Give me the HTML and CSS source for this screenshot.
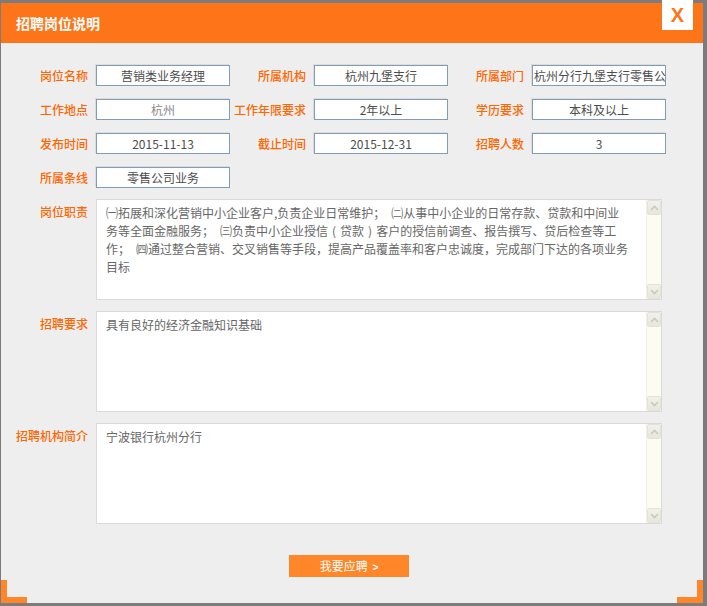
FILE: index.html
```html
<!DOCTYPE html>
<html lang="zh-CN">
<head>
<meta charset="utf-8">
<title>招聘岗位说明</title>
<link rel="stylesheet" href="styles.css">
</head>
<body>
<div class="backdrop">
  <div class="dialog">
    <div class="header">
      <h1 class="title">招聘岗位说明</h1>
      <a class="close" href="#">X</a>
    </div>
    <div class="body">
      <div class="grid">
        <div class="row">
          <div class="field"><span class="label">岗位名称</span><div class="input">营销类业务经理</div></div>
          <div class="field"><span class="label">所属机构</span><div class="input">杭州九堡支行</div></div>
          <div class="field"><span class="label">所属部门</span><div class="input left">杭州分行九堡支行零售公</div></div>
        </div>
        <div class="row">
          <div class="field"><span class="label">工作地点</span><div class="input light">杭州</div></div>
          <div class="field"><span class="label">工作年限要求</span><div class="input">2年以上</div></div>
          <div class="field"><span class="label">学历要求</span><div class="input">本科及以上</div></div>
        </div>
        <div class="row">
          <div class="field"><span class="label">发布时间</span><div class="input">2015-11-13</div></div>
          <div class="field"><span class="label">截止时间</span><div class="input">2015-12-31</div></div>
          <div class="field"><span class="label">招聘人数</span><div class="input">3</div></div>
        </div>
        <div class="row">
          <div class="field"><span class="label">所属条线</span><div class="input">零售公司业务</div></div>
        </div>
      </div>

      <div class="area-row">
        <span class="label area-label">岗位职责</span>
        <div class="textarea">
          <div class="ta-text">㈠拓展和深化营销中小企业客户,负责企业日常维护；　㈡从事中小企业的日常存款、贷款和中间业<br>务等全面金融服务；　㈢负责中小企业授信<span class="paren">(</span>贷款<span class="paren">)</span>客户的授信前调查、报告撰写、贷后检查等工<br>作；　㈣通过整合营销、交叉销售等手段，提高产品覆盖率和客户忠诚度，完成部门下达的各项业务<br>目标</div>
          <div class="scrollbar">
            <span class="sb-btn"><svg width="9" height="6" viewBox="0 0 9 6"><polyline points="1,5 4.5,1.5 8,5" fill="none" stroke="#c9c9bf" stroke-width="1.6"/></svg></span>
            <span class="sb-btn"><svg width="9" height="6" viewBox="0 0 9 6"><polyline points="1,1 4.5,4.5 8,1" fill="none" stroke="#c9c9bf" stroke-width="1.6"/></svg></span>
          </div>
        </div>
      </div>

      <div class="area-row">
        <span class="label area-label">招聘要求</span>
        <div class="textarea">
          <div class="ta-text">具有良好的经济金融知识基础</div>
          <div class="scrollbar">
            <span class="sb-btn"><svg width="9" height="6" viewBox="0 0 9 6"><polyline points="1,5 4.5,1.5 8,5" fill="none" stroke="#c9c9bf" stroke-width="1.6"/></svg></span>
            <span class="sb-btn"><svg width="9" height="6" viewBox="0 0 9 6"><polyline points="1,1 4.5,4.5 8,1" fill="none" stroke="#c9c9bf" stroke-width="1.6"/></svg></span>
          </div>
        </div>
      </div>

      <div class="area-row">
        <span class="label area-label">招聘机构简介</span>
        <div class="textarea">
          <div class="ta-text">宁波银行杭州分行</div>
          <div class="scrollbar">
            <span class="sb-btn"><svg width="9" height="6" viewBox="0 0 9 6"><polyline points="1,5 4.5,1.5 8,5" fill="none" stroke="#c9c9bf" stroke-width="1.6"/></svg></span>
            <span class="sb-btn"><svg width="9" height="6" viewBox="0 0 9 6"><polyline points="1,1 4.5,4.5 8,1" fill="none" stroke="#c9c9bf" stroke-width="1.6"/></svg></span>
          </div>
        </div>
      </div>

      <div class="actions">
        <button class="apply" type="button">我要应聘 <span class="arrow">&gt;</span></button>
      </div>
    </div>
    <span class="corner corner-bl"></span>
    <span class="corner corner-br"></span>
  </div>
</div>
</body>
</html>
```

FILE: styles.css
```css
* {
  box-sizing: border-box;
}

html, body {
  margin: 0;
  padding: 0;
}

body {
  background: #7c7c7c;
  font-family: "Noto Sans CJK SC", "Liberation Sans", sans-serif;
  font-size: 12px;
  width: 707px;
  height: 606px;
  overflow: hidden;
}

.backdrop {
  padding: 3px 0 0 1px;
}

.dialog {
  position: relative;
  width: 702px;
  height: 600px;
  background: #eeeeee;
}

.header {
  position: relative;
  height: 40px;
  background: #fe7519;
}

.title {
  margin: 0;
  padding-left: 15px;
  font-size: 14px;
  font-weight: bold;
  line-height: 40px;
  color: #ffffff;
}

.close {
  position: absolute;
  top: -3px;
  right: 10px;
  width: 31px;
  height: 30px;
  background: #ffffff;
  color: #fe7519;
  font-family: "Liberation Sans", Arial, sans-serif;
  font-weight: bold;
  font-size: 20px;
  line-height: 30px;
  text-align: center;
  text-decoration: none;
}

.body {
  padding: 22px 0 0 11px;
}

.grid {
  display: flex;
  flex-direction: column;
  gap: 13px;
}

.row {
  display: flex;
}

.field {
  display: flex;
  align-items: center;
  width: 218px;
}

.label {
  width: 76px;
  margin-right: 8px;
  text-align: right;
  color: #ff6600;
  font-size: 12px;
  font-weight: 500;
  white-space: nowrap;
}

.input {
  width: 134px;
  height: 21px;
  background: #ffffff;
  border: 1px solid #7f9db9;
  box-shadow: -1px -1px 0 #dcdcdc;
  color: #4d4d4d;
  font-size: 12px;
  line-height: 19px;
  text-align: center;
  white-space: nowrap;
  overflow: hidden;
}

.input.left {
  text-align: left;
  padding-left: 1px;
}

.input.light {
  color: #888888;
}

.area-row {
  display: flex;
  align-items: flex-start;
  margin-top: 11px;
}

.area-label {
  padding-top: 5px;
  line-height: 16px;
}

.textarea {
  display: flex;
  width: 566px;
  height: 101px;
  background: #ffffff;
  border: 1px solid #dadada;
}

.ta-text {
  flex: 1;
  padding: 4px 0 0 9px;
  color: #666666;
  font-size: 12px;
  line-height: 18px;
  white-space: nowrap;
  overflow: hidden;
}

.paren {
  margin: 0 4px;
}

.scrollbar {
  display: flex;
  flex-direction: column;
  justify-content: space-between;
  width: 15px;
  background: #fcfcf2;
  border-left: 1px solid #efefe6;
}

.sb-btn {
  display: flex;
  align-items: center;
  justify-content: center;
  height: 15px;
  background: linear-gradient(#f2f2ea, #e6e6dc);
  border: 1px solid #e2e2d8;
  border-radius: 2px;
}

.actions {
  margin-top: 31px;
  padding-left: 277px;
}

.apply {
  display: block;
  width: 120px;
  height: 22px;
  padding: 0;
  border: none;
  background: #ff8629;
  color: #ffffff;
  font-family: "Noto Sans CJK SC", sans-serif;
  font-size: 12px;
  line-height: 22px;
  text-align: center;
}

.arrow {
  font-family: "Liberation Sans", sans-serif;
  font-size: 10px;
  font-weight: bold;
  margin-left: 2px;
}

.corner {
  position: absolute;
  bottom: 0;
  width: 26px;
  height: 23px;
  border-bottom: 6px solid #ff8629;
}

.corner-bl {
  left: 0;
  border-left: 6px solid #ff8629;
}

.corner-br {
  right: 0;
  border-right: 6px solid #ff8629;
}
```
